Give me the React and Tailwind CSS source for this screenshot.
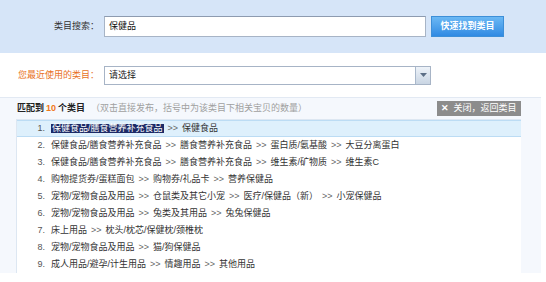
import React from "react";

const rows = [
  [["保健食品/膳食营养补充食品", "保健食品"]],
  [["保健食品/膳食营养补充食品", "膳食营养补充食品", "蛋白质/氨基酸", "大豆分离蛋白"]],
  [["保健食品/膳食营养补充食品", "膳食营养补充食品", "维生素/矿物质", "维生素C"]],
  [["购物提货券/蛋糕面包", "购物券/礼品卡", "营养保健品"]],
  [["宠物/宠物食品及用品", "仓鼠类及其它小宠", "医疗/保健品（新）", "小宠保健品"]],
  [["宠物/宠物食品及用品", "兔类及其用品", "兔兔保健品"]],
  [["床上用品", "枕头/枕芯/保健枕/颈椎枕"]],
  [["宠物/宠物食品及用品", "猫/狗保健品"]],
  [["成人用品/避孕/计生用品", "情趣用品", "其他用品"]],
];

function Row({ idx, parts }) {
  const active = idx === 0;
  return (
    <div
      className={
        "flex items-center h-[17px] " +
        (active ? "bg-[#def0fc] border-y border-[#bcdcf4]" : "")
      }
    >
      <span className="w-[28px] text-right text-[#555] pr-[0px]">{idx + 1}.</span>
      <span className="ml-[6px] flex items-center whitespace-nowrap">
        {parts.map((p, i) => (
          <React.Fragment key={i}>
            {i > 0 && <span className="text-[#666] mx-[4px]">&gt;&gt;</span>}
            <span
              className={
                active && i === 0
                  ? "bg-[#1c2a66] text-white px-[1px]"
                  : "text-[#333]"
              }
            >
              {p}
            </span>
          </React.Fragment>
        ))}
      </span>
    </div>
  );
}

export default function App() {
  return (
    <div
      className="w-[546px] h-[282px] bg-white text-[9px] leading-none overflow-hidden"
      style={{ fontFamily: '"Liberation Sans", "Noto Sans CJK SC", sans-serif' }}
    >
      <div className="h-[53px] bg-[#d6e5f8] flex items-center">
        <div className="w-[101px] text-right text-[#333] pr-[2px]">类目搜索：</div>
        <div className="ml-[3px] w-[322px] h-[21px] bg-white border border-[#a7b4c6] border-t-[#8d9bb0] flex items-center pl-[4px] text-[#111]">
          保健品
        </div>
        <div className="ml-[5px] w-[73px] h-[21px] bg-gradient-to-b from-[#6bb8f4] to-[#2f8ae3] border border-[#3d8fd8] text-white font-bold flex items-center justify-center">
          快速找到类目
        </div>
      </div>
      <div className="h-[44px] flex items-center">
        <div className="w-[101px] text-right text-[#e8711e] pr-[2px]">您最近使用的类目：</div>
        <div className="ml-[3px] w-[327px] h-[19px] bg-white border border-[#a7b4c6] flex items-center justify-between">
          <span className="pl-[4px] text-[#222]">请选择</span>
          <span className="w-[15px] h-[17px] bg-gradient-to-b from-[#eef3f9] to-[#c9d5e3] border-l border-[#a9b8cb] flex items-center justify-center">
            <svg width="7" height="4" viewBox="0 0 7 4">
              <path d="M0 0 L7 0 L3.5 4 Z" fill="#5d6f86" />
            </svg>
          </span>
        </div>
      </div>
      <div className="w-[541px] h-[176px] bg-[#f5f8fd] border-t border-[#e2e9f3]">
        <div className="h-[21px] flex items-center justify-between pl-[17px] pr-[20px]">
          <div className="flex items-center whitespace-nowrap">
            <span className="font-bold text-[#222]">匹配到</span>
            <span className="font-bold text-[#f07818] mx-[2px]">10</span>
            <span className="font-bold text-[#222]">个类目</span>
            <span className="ml-[6px] text-[#a0a0a0]">（双击直接发布，括号中为该类目下相关宝贝的数量）</span>
          </div>
          <div className="w-[84px] h-[15px] bg-[#8c8c8c] text-white flex items-center justify-center">
            <span className="font-bold mr-[4px]">✕</span>
            <span>关闭，返回类目</span>
          </div>
        </div>
        <div className="ml-[16px] w-[505px] h-[154px] bg-white border-l border-t border-[#dde7f2]">
          {rows.map((r, i) => (
            <Row key={i} idx={i} parts={r[0]} />
          ))}
        </div>
      </div>
    </div>
  );
}
